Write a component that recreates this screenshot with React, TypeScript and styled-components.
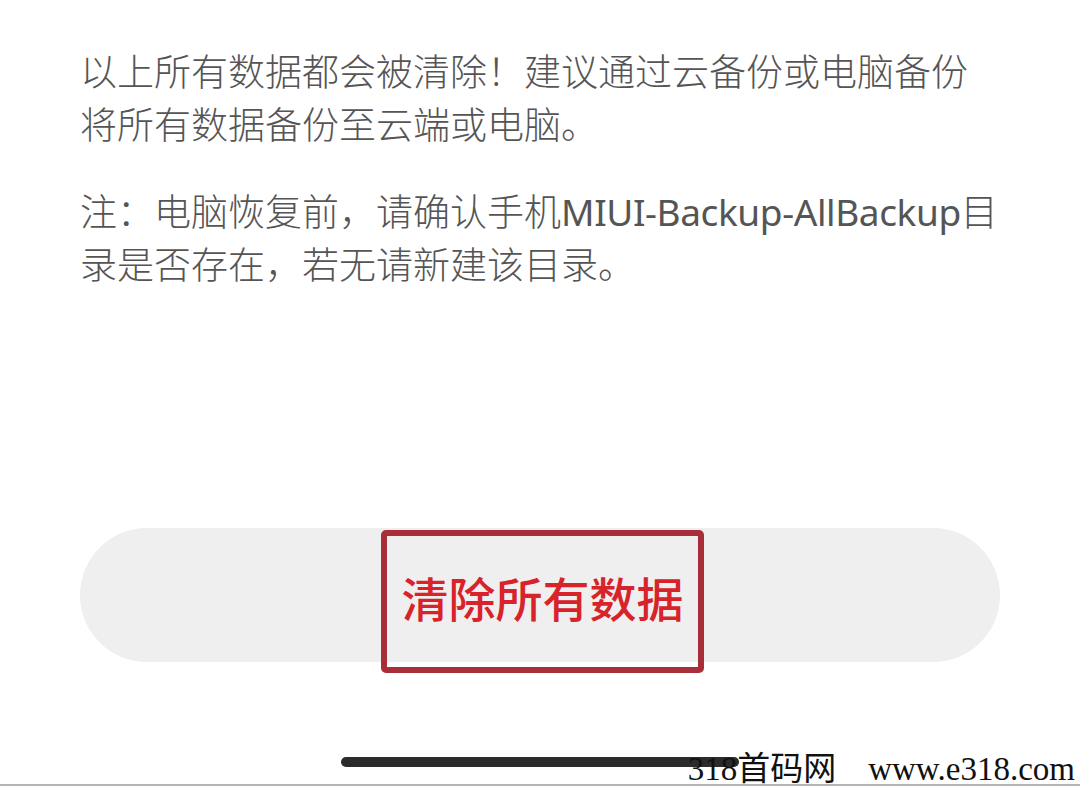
import styled, { createGlobalStyle } from "styled-components";

const GlobalStyle = createGlobalStyle`
  html, body {
    margin: 0;
    padding: 0;
    background: #ffffff;
  }
  * {
    box-sizing: border-box;
  }
`;

const App = () => {
  return (
    <>
      <GlobalStyle />
      <Page>
        <Notes>
          <Paragraph>
            以上所有数据都会被清除！建议通过云备份或电脑备份
            <br />
            将所有数据备份至云端或电脑。
          </Paragraph>
          <Paragraph>
            注：电脑恢复前，请确认手机<Latin>MIUI-Backup-AllBackup</Latin>目
            <br />
            录是否存在，若无请新建该目录。
          </Paragraph>
        </Notes>

        <ClearButton type="button">
          <Highlight>清除所有数据</Highlight>
        </ClearButton>

        <HomeBarRow>
          <HomeBar />
        </HomeBarRow>

        <Watermark>
          <span>318首码网</span>
          <span>www.e318.com</span>
        </Watermark>
      </Page>
    </>
  );
};

export default App;

const Page = styled.div`
  position: relative;
  width: 1080px;
  height: 786px;
  padding: 45px 80px 0;
  display: flex;
  flex-direction: column;
  border-bottom: 2px solid #b4b4b4;
  overflow: hidden;
`;

const Notes = styled.div`
  display: flex;
  flex-direction: column;
  gap: 34px;
`;

const Paragraph = styled.p`
  margin: 0;
  font-family: "Noto Sans", "Noto Sans CJK SC", sans-serif;
  font-size: 37px;
  font-weight: 300;
  line-height: 53px;
  color: #555555;
  white-space: nowrap;
`;

const Latin = styled.span`
  font-weight: 400;
  letter-spacing: -0.4px;
`;

const ClearButton = styled.button`
  margin-top: 237px;
  width: 920px;
  height: 134px;
  border: none;
  border-radius: 67px;
  background: #efefef;
  display: flex;
  align-items: center;
  justify-content: center;
  padding: 0;
  cursor: pointer;
`;

const Highlight = styled.span`
  position: relative;
  top: 6px;
  left: 2px;
  display: inline-block;
  border: 6px solid #a82f3a;
  border-radius: 5px;
  padding: 37px 14px 46px 15px;
  font-family: "Noto Sans CJK SC", sans-serif;
  font-size: 47px;
  line-height: 48px;
  font-weight: 500;
  color: #d8232a;
  white-space: nowrap;
`;

const HomeBarRow = styled.div`
  margin-top: 95px;
  display: flex;
  justify-content: center;
`;

const HomeBar = styled.div`
  width: 398px;
  height: 10px;
  border-radius: 5px;
  background: #2b2b2b;
`;

const Watermark = styled.div`
  position: absolute;
  right: 5px;
  bottom: -2px;
  display: flex;
  gap: 32px;
  font-family: "Liberation Serif", "Noto Sans CJK SC", serif;
  font-size: 33px;
  line-height: 33px;
  color: #111111;
  white-space: nowrap;
`;
